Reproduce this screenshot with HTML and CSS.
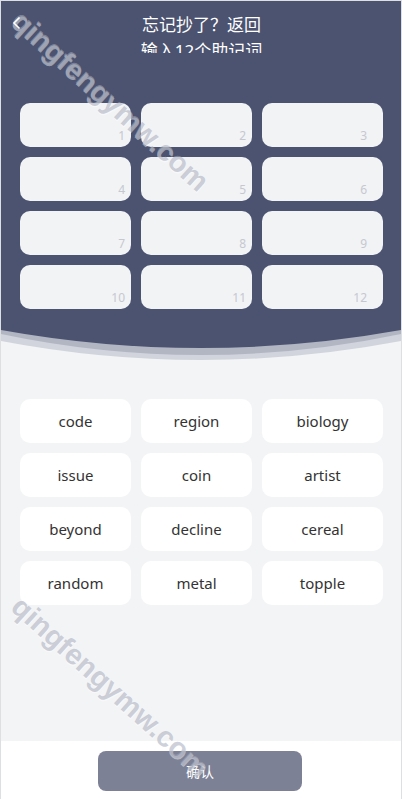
FILE: index.html
```html
<!DOCTYPE html>
<html lang="zh">
<head>
  <meta charset="UTF-8">
  <title>备份助记词</title>
  <link rel="stylesheet" href="styles.css">
</head>
<body>
  <div class="page">
    <header class="top">
      <div class="nav">
        <span class="back">
          <svg width="10" height="14" viewBox="0 0 10 14"><path d="M7.5 1.5 L2 7 L7.5 12.5" fill="none" stroke="#fff" stroke-width="1.6"/></svg>
        </span>
        <h1>忘记抄了？返回</h1>
      </div>
      <div class="sub-clip"><p>输入12个助记词</p></div>

      <div class="slots">
        <div class="slot"><span class="num">1</span></div>
        <div class="slot"><span class="num">2</span></div>
        <div class="slot"><span class="num">3</span></div>
        <div class="slot"><span class="num">4</span></div>
        <div class="slot"><span class="num">5</span></div>
        <div class="slot"><span class="num">6</span></div>
        <div class="slot"><span class="num">7</span></div>
        <div class="slot"><span class="num">8</span></div>
        <div class="slot"><span class="num">9</span></div>
        <div class="slot"><span class="num">10</span></div>
        <div class="slot"><span class="num">11</span></div>
        <div class="slot"><span class="num">12</span></div>
      </div>
    </header>

    <svg class="wave" width="400" height="40" viewBox="0 0 400 40" preserveAspectRatio="none">
      <path d="M0 0 L400 0 L400 21 Q200 59 0 21 Z" fill="#d1d4dc"/>
      <path d="M0 0 L400 0 L400 14 Q200 56 0 14 Z" fill="#b2b6c3"/>
      <path d="M0 0 L400 0 L400 10 Q200 46 0 10 Z" fill="#4b5370"/>
    </svg>

    <div class="words">
      <div class="word">code</div>
      <div class="word">region</div>
      <div class="word">biology</div>
      <div class="word">issue</div>
      <div class="word">coin</div>
      <div class="word">artist</div>
      <div class="word">beyond</div>
      <div class="word">decline</div>
      <div class="word">cereal</div>
      <div class="word">random</div>
      <div class="word">metal</div>
      <div class="word">topple</div>
    </div>

    <footer class="bottom">
      <button class="confirm" type="button">确认</button>
    </footer>

    <div class="mark mark-top">qingfengymw.com</div>
    <div class="mark mark-bottom">qingfengymw.com</div>
  </div>
</body>
</html>
```

FILE: styles.css
```css
:root {
  --azul: #4b5370;
  --fondo: #f3f4f6;
  --caja: #f2f3f5;
  --gris-num: #c6c8d1;
  --boton: #7d8196;
}

* {
  box-sizing: border-box;
}

body {
  margin: 0;
  padding: 0;
  font-family: 'Noto Sans', 'Noto Sans CJK SC', sans-serif;
  background-color: #fff;
}

.page {
  position: relative;
  width: 402px;
  height: 799px;
  overflow: hidden;
  background-color: var(--fondo);
  border: 1px solid #dedfe2;
  border-bottom: none;
  display: flex;
  flex-direction: column;
}

.top {
  background-color: var(--azul);
  padding: 0 18px 11px 19px;
}

.nav {
  position: relative;
  height: 47px;
  display: flex;
  align-items: center;
  justify-content: center;
}

.back {
  position: absolute;
  z-index: 2;
  left: -8px;
  top: 15px;
  display: flex;
}

.nav h1 {
  margin: 0;
  color: #fff;
  font-size: 17px;
  font-weight: 400;
  line-height: 1;
}

.sub-clip {
  height: 12px;
  margin-top: -7px;
  overflow: hidden;
}

.sub-clip p {
  margin: 0;
  color: #fff;
  font-size: 17px;
  line-height: 20px;
  text-align: center;
}

.slots {
  margin-top: 50px;
  display: grid;
  grid-template-columns: 111px 111px 121px;
  grid-auto-rows: 44px;
  gap: 10px;
}

.slot {
  background-color: var(--caja);
  border-radius: 10px;
  display: flex;
  align-items: flex-end;
  justify-content: flex-end;
  padding: 0 6px 3px 0;
}

.slot:nth-child(3n) {
  padding-right: 16px;
}

.num {
  color: var(--gris-num);
  font-size: 12px;
}

.wave {
  display: block;
  width: 400px;
  height: 40px;
}

.words {
  margin-top: 39px;
  padding-left: 19px;
  display: grid;
  grid-template-columns: 111px 111px 121px;
  grid-auto-rows: 44px;
  gap: 10px;
}

.word {
  background-color: #fff;
  border-radius: 10px;
  display: flex;
  align-items: center;
  justify-content: center;
  color: #333;
  font-size: 15px;
}

.bottom {
  margin-top: auto;
  height: 58px;
  background-color: #fff;
  padding-top: 10px;
  display: flex;
  justify-content: center;
}

.confirm {
  width: 204px;
  height: 40px;
  margin-left: -2px;
  border: none;
  border-radius: 8px;
  background-color: var(--boton);
  color: #fff;
  font-family: 'Noto Sans CJK SC', sans-serif;
  font-size: 14px;
  cursor: pointer;
}

.mark {
  position: absolute;
  font-family: 'Liberation Sans', sans-serif;
  font-size: 29px;
  font-weight: 700;
  color: rgba(165, 170, 186, 0.55);
  text-shadow: 1px 1px 0 rgba(255, 255, 255, 0.45);
  transform-origin: 0 0;
  transform: rotate(42deg);
  white-space: nowrap;
  pointer-events: none;
}

.mark-top {
  left: 26px;
  top: 3px;
}

.mark-bottom {
  left: 26px;
  top: 589px;
}
```
